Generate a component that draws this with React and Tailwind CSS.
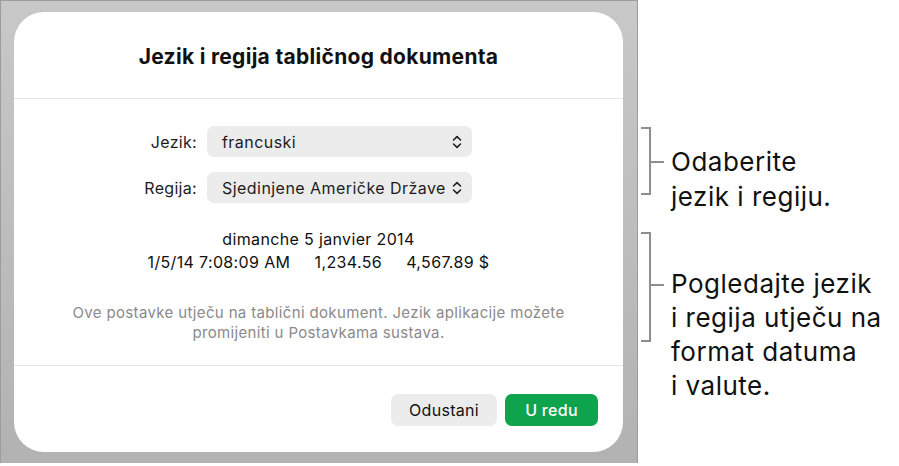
const font = { fontFamily: "Inter, 'Noto Sans', sans-serif" };

// up/down popup chevrons, as drawn by macOS select buttons
const Chevrons = () => (
  <svg width="10" height="14" viewBox="0 0 10 14" fill="none" stroke="#1f1f1f" strokeWidth="1.6" strokeLinecap="round" strokeLinejoin="round">
    <path d="M1.5 5 L5 1.6 L8.5 5" />
    <path d="M1.5 9 L5 12.4 L8.5 9" />
  </svg>
);

const PopupRow = ({ label, value }) => (
  <div className="flex items-center">
    <span className="w-[76px] pr-[10px] text-right text-[16px] tracking-[0.3px] text-[#1d1d1f]">{label}</span>
    <div className="flex h-[31px] w-[265px] items-center justify-between rounded-[7px] bg-[#ececec] pl-[15px] pr-[10px]">
      <span className="whitespace-nowrap text-[16px] tracking-[0.45px] text-[#1d1d1f]">{value}</span>
      <Chevrons />
    </div>
  </div>
);

const Bracket = ({ height, tickAt }) => (
  <div className="relative w-[24px] shrink-0" style={{ height }}>
    <div className="absolute left-0 top-0 h-full w-[10px] border-y-[2px] border-r-[2px] border-[#8e8e8e]" />
    <div className="absolute left-[10px] h-[2px] w-[13px] bg-[#8e8e8e]" style={{ top: tickAt }} />
  </div>
);

export default function App() {
  return (
    <div className="flex h-[466px] w-[899px] bg-white" style={font}>
      {/* window backdrop with the sheet */}
      <div className="h-[463px] w-[638px] shrink-0 border-l border-t border-r border-[#9c9c9c] bg-gradient-to-b from-[#c8c8c8] to-[#b2b2b2] pl-[13px] pr-[14px] pt-[11px]">
        <div className="flex h-[440px] w-[609px] flex-col rounded-[30px] bg-white">
          <div className="flex h-[87px] items-center justify-center border-b border-[#e6e6e6] pt-[3px]">
            <h1 className="text-[21px] font-bold tracking-[0.3px] text-[#111]">Jezik i regija tabličnog dokumenta</h1>
          </div>

          <div className="flex h-[267px] flex-col items-center border-b border-[#e6e6e6] pt-[27px]">
            <div className="flex flex-col gap-[15px] pr-[34px]">
              <PopupRow label="Jezik:" value="francuski" />
              <PopupRow label="Regija:" value="Sjedinjene Američke Države" />
            </div>

            <div className="mt-[25px] flex flex-col items-center text-[16px] leading-[23px] tracking-[0.35px] text-[#111]">
              <span>dimanche 5 janvier 2014</span>
              <span className="whitespace-pre">1/5/14 7:08:09 AM     1,234.56     4,567.89 $</span>
            </div>

            <p className="mt-[29px] text-center text-[15px] leading-[20px] tracking-[0.35px] text-[#8a8a8a]">
              Ove postavke utječu na tablični dokument. Jezik aplikacije možete
              <br />
              promijeniti u Postavkama sustava.
            </p>
          </div>

          <div className="flex flex-1 items-start justify-end gap-[8px] pr-[25px] pt-[28px]">
            <button className="h-[32px] w-[106px] rounded-[7px] bg-[#ececec] text-[16px] tracking-[0.3px] text-[#111]">Odustani</button>
            <button className="h-[32px] w-[93px] rounded-[7px] bg-[#0ea44d] text-[16px] font-medium tracking-[0.3px] text-white">U redu</button>
          </div>
        </div>
      </div>

      {/* callouts */}
      <div className="flex flex-col pl-[3px] pt-[127px]">
        <div className="flex items-start">
          <Bracket height={68} tickAt={34} />
          <p className="ml-[6px] mt-[17px] whitespace-nowrap text-[26px] leading-[35px] tracking-[0.5px] text-[#111]">
            Odaberite
            <br />
            jezik i regiju.
          </p>
        </div>
        <div className="-mt-[32px] flex items-start">
          <div className="pt-[50px]">
            <Bracket height={110} tickAt={52} />
          </div>
          <p className="ml-[6px] mt-[85px] whitespace-nowrap text-[26px] leading-[34px] tracking-[0.5px] text-[#111]">
            Pogledajte jezik
            <br />
            i regija utječu na
            <br />
            format datuma
            <br />
            i valute.
          </p>
        </div>
      </div>
    </div>
  );
}
